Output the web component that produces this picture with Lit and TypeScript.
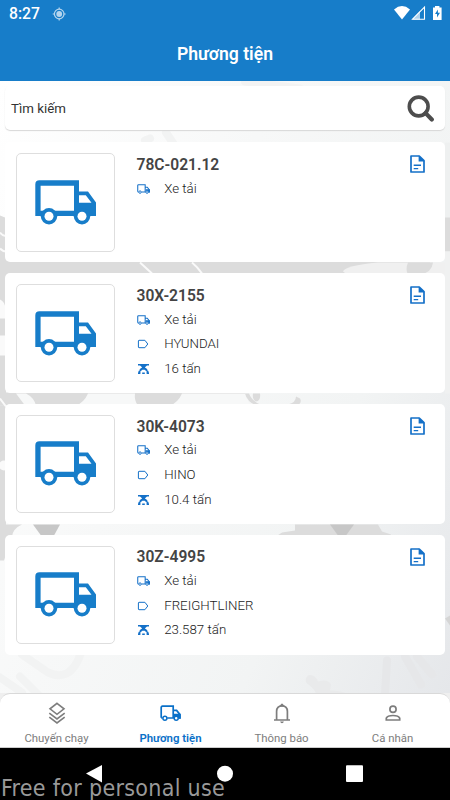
import { LitElement, html, svg, css, nothing } from "lit";
import { customElement, property } from "lit/decorators.js";

interface Vehicle {
  plate: string;
  kind: string;
  brand?: string;
  load?: string;
}

const vehicles: Vehicle[] = [
  { plate: "78C-021.12", kind: "Xe tải" },
  { plate: "30X-2155", kind: "Xe tải", brand: "HYUNDAI", load: "16 tấn" },
  { plate: "30K-4073", kind: "Xe tải", brand: "HINO", load: "10.4 tấn" },
  { plate: "30Z-4995", kind: "Xe tải", brand: "FREIGHTLINER", load: "23.587 tấn" },
];

const smallTruck = svg`
  <path d="M1.2 12.6V2.2Q1.2 1 2.4 1H13.2V12.8H7.2M1.2 12.8H2.6M13.2 5.2H16.6L20 9.4V12.8H18.4" fill="none" stroke="currentColor" stroke-width="1.7"/>
  <path d="M14 8.6H20.6V13.6H18.6A2.6 2.6 0 0 0 14 12Z" fill="currentColor"/>
  <circle cx="4.9" cy="13" r="2" fill="#fff" stroke="currentColor" stroke-width="1.5"/>
  <circle cx="16.2" cy="13" r="2" fill="#fff" stroke="currentColor" stroke-width="1.5"/>`;

@customElement("vehicle-card")
export class VehicleCard extends LitElement {
  @property({ attribute: false }) vehicle!: Vehicle;

  static styles = css`
    :host {
      display: flex;
      box-sizing: border-box;
      height: 120px;
      padding: 11px 19.5px 0 11px;
      background: #fff;
      border-radius: 5px;
    }
    .thumb {
      display: flex;
      align-items: center;
      justify-content: center;
      box-sizing: border-box;
      width: 98.5px;
      height: 98.5px;
      border: 1px solid #dedede;
      border-radius: 5px;
      color: #177dc9;
    }
    .truck { display: block; }
    .info { flex: 1; margin-left: 22px; }
    .plate {
      height: 22.6px;
      padding-top: 0.8px;
      line-height: 23px;
      font-size: 15.6px;
      font-weight: 600;
      color: #444;
    }
    .row { display: flex; align-items: center; height: 24.6px; }
    .icon { width: 27.7px; color: #1470c8; display: flex; align-items: center; }
    .text { font-size: 13.3px; font-weight: 300; color: #1c1c1c; line-height: 24px; white-space: nowrap; }
    .doc { width: 17px; height: 20px; margin-top: 1px; color: #1470c8; }
  `;

  render() {
    const v = this.vehicle;
    return html`
      <div class="thumb">
        <svg class="truck" width="61" height="45" viewBox="0 0 61 45">
          <path fill="currentColor" fill-rule="evenodd" d="M4.5 .3H44V11.5H53L61 22.5V36H.3V4.5Q.3 .3 4.5 .3ZM5.6 5.7V30.7H39V5.7ZM44 15.3V22.7H56.5L50.8 15.3Z"/>
          <circle cx="14" cy="36.2" r="8.2" fill="currentColor"/><circle cx="14" cy="36.2" r="4.5" fill="#fff"/>
          <circle cx="47" cy="36.2" r="8.2" fill="currentColor"/><circle cx="47" cy="36.2" r="4.5" fill="#fff"/>
        </svg>
      </div>
      <div class="info">
        <div class="plate">${v.plate}</div>
        <div class="row">
          <span class="icon"><svg width="13" height="10" viewBox="0 0 21 16">${smallTruck}</svg></span>
          <span class="text">${v.kind}</span>
        </div>
        ${v.brand
          ? html`<div class="row">
              <span class="icon"><svg width="13" height="10" viewBox="0 0 13 10"><path d="M2 1.3H7.9L10.8 5 7.9 8.7H2Q1.4 8.7 1.4 8V2Q1.4 1.3 2 1.3Z" fill="none" stroke="currentColor" stroke-width="1" stroke-linejoin="round"/></svg></span>
              <span class="text">${v.brand}</span>
            </div>`
          : nothing}
        ${v.load
          ? html`<div class="row">
              <span class="icon"><svg width="13" height="12" viewBox="0 0 13 12"><path d="M1 1H12V2.5H10L8 4.2V5H5V4.2L3 2.5H1Z" fill="currentColor"/><path d="M4.6 4.8H8.4Q9.9 5.6 10.8 7.2L9.4 8.2 7.6 6.8H5.4L3.6 8.2 2.2 7.2Q3.1 5.6 4.6 4.8ZM2 7.6L3.6 8.6 3.4 9.7V11H1V10.2Q1.2 8.8 2 7.6ZM11 7.6L9.4 8.6 9.6 9.7V11H12V10.2Q11.8 8.8 11 7.6ZM5.2 9.4H7.8V11H5.2Z" fill="currentColor"/></svg></span>
              <span class="text">${v.load}</span>
            </div>`
          : nothing}
      </div>
      <svg class="doc" viewBox="0 0 17 20">
        <path d="M2 2H10.3L15 6.7V18H2Z" fill="none" stroke="currentColor" stroke-width="1.7" stroke-linejoin="round"/>
        <path d="M9.6 1.6V7.4H15.4Z" fill="currentColor"/>
        <path d="M4.7 11.2H12M4.7 14.6H9.2" stroke="currentColor" stroke-width="1.4"/>
      </svg>
    `;
  }
}

@customElement("app-root")
export class AppRoot extends LitElement {
  static styles = css`
    :host {
      display: flex;
      flex-direction: column;
      position: relative;
      width: 450px;
      height: 800px;
      overflow: hidden;
      font-family: Roboto, "Noto Sans", sans-serif;
      background: #efefef;
    }
    .header { height: 80.5px; background: #177dc9; color: #fff; }
    .status { display: flex; align-items: center; height: 28px; padding: 0 8px 0 9px; }
    .time { font-size: 15.7px; font-weight: 500; width: 42.5px; line-height: 28px; }
    .signals { display: block; margin-left: auto; margin-top: -2px; }
    .title { text-align: center; font-size: 17.6px; font-weight: 600; line-height: 53px; }
    .content {
      position: relative;
      height: 612.5px;
      background: linear-gradient(112deg, #fff 0%, #f7f8f8 40%, #f2f4f4 70%, #e5e7ea 100%);
    }
    .map { position: absolute; inset: 0; width: 450px; height: 667px; }
    .stack { position: relative; display: flex; flex-direction: column; padding: 5.5px 5px 0; }
    .search {
      display: flex;
      align-items: center;
      height: 44px;
      background: #fff;
      border-radius: 5px;
      box-shadow: 0 1px 1px #d8d8d8;
      padding: 0 10px 0 6px;
      margin-bottom: 12px;
    }
    .hint { flex: 1; font-size: 13.3px; color: #333; }
    .list { display: flex; flex-direction: column; gap: 10.87px; }
    .tabs {
      position: relative;
      display: grid;
      grid-template-columns: 113px 115px 107px 115px;
      box-sizing: border-box;
      height: 55px;
      background: #fff;
      border-top: 1px solid #d9d9d9;
      border-bottom: 1px solid #ccc;
      border-radius: 10px 10px 0 0;
    }
    .tab { display: flex; flex-direction: column; align-items: center; color: #7d7d7d; font-size: 11.4px; }
    .tab svg { height: 24px; margin-top: 7px; }
    .label { line-height: 14px; margin-top: 5.5px; white-space: nowrap; }
    .active { color: #0a70c8; font-weight: 600; }
    .system { position: relative; flex: 1; background: #000; }
    .keys { display: block; }
    .watermark {
      position: absolute;
      left: 1px;
      bottom: -2px;
      font-family: "DejaVu Sans Condensed", "DejaVu Sans", sans-serif;
      font-stretch: condensed;
      font-size: 23px;
      letter-spacing: 0.3px;
      line-height: 27px;
      color: #999;
      white-space: nowrap;
    }
  `;

  private renderMap() {
    return html`<svg class="map" viewBox="0 80.5 450 667">
      <g fill="none" stroke="#f2f3f3" stroke-width="8" stroke-linecap="round">
        <path d="M145 140L150 138M166 132L174 144M0 677L22 692M20 676L40 696M22 654L48 672Q70 682 80 655"/>
        <path d="M387 660L385 694M405 656L421 684M417 656L432 674" stroke="#e6e7e9"/>
        <path d="M245 81L300 88" stroke="#f3f3f3"/>
      </g>
      <path d="M308 675Q314 673 318 681Q328 678 331 684L330 690Q342 690 348 694H316Q315 688 307 683Q304 679 308 675Z" fill="#e9eaeb"/>
      <path d="M0 215L10 219H445V163H450V251H430V275H0Z" fill="#dcdcdc"/>
      <path d="M445 142H450V217H445Z" fill="#eef0f0"/>
      <path d="M0 274H6V405H0Z" fill="#dcdcdc"/>
      <path d="M343 271Q345 265 378 262H450V274H347Z" fill="#f0f0f0"/>
      <path d="M408 262H433Q432 272 420 274H408Q405 269 408 262Z" fill="#dcdcdc"/>
      <path d="M445 251H450V393H445Z" fill="#f0f1f1"/>
      <path d="M0 392H245V405H0Z" fill="#dcdcdc"/>
      <path d="M16 393H26Q34 397 36 405H25ZM88 393H135Q134 400 138 405H76Q84 402 88 393ZM182 393H245Q247 401 252 405H170Q178 402 182 393Z" fill="#f7f8f8"/>
      <path d="M253 393H260Q261 400 256 401Q252 399 253 393ZM288 404Q296 402 296 396L300 398Q302 401 299 404ZM245 393H249Q252 401 262 405H256Q247 401 245 393Z" fill="#dcdcdc"/>
      <path d="M0 405H6V524H22Q13 528 12 536L4 560H0Z" fill="#dcdcdc"/>
      <path d="M0 299Q7 302 6 318H0ZM0 335H6V355H0Z" fill="#fafafa"/>
      <circle cx="4" cy="465" r="5" fill="#fafafa"/>
      <path d="M33 524H60L54 535H41Z" fill="#c7c7c7"/>
      <path d="M295 524H378L382 531 391 534V536H276L282 532 295 530Z" fill="#dcdcdc"/>
      <path d="M330 524H354L346 535H338Z" fill="#c7c7c7"/>
      <path d="M140 262L152 273M192 262Q198 267 202 273M0 232Q3 236 6 235M0 248Q3 251 6 251M0 398L6 406" fill="none" stroke="#fafafa" stroke-width="2"/>
      <path d="M445 618L450 615V625Z" fill="#d5d5d5"/>
    </svg>`;
  }

  render() {
    return html`
      <div class="header">
        <div class="status">
          <span class="time">8:27</span>
          <svg width="15" height="15" viewBox="0 0 15 15" color="#b5d5ee"><circle cx="7.2" cy="7" r="4.8" fill="none" stroke="currentColor" stroke-width="1.2"/><circle cx="7.2" cy="7" r="2.9" fill="currentColor"/><path d="M7.2 .5V2.5M7.2 11.5V13.5M.7 7H2.7M11.7 7H13.7" stroke="currentColor" stroke-width="1.2"/></svg>
          <svg class="signals" width="49" height="16" viewBox="393 5 49 16">
            <path d="M394 9.4Q402 2.6 410 9.4L402 19.5Z" fill="#fff"/>
            <path d="M424.5 7V19.2H412.5Z" fill="none" stroke="#fff" stroke-width="1.1"/><path d="M420 11V19.5H412Z" fill="#fff" opacity=".65"/>
            <path d="M433 7.6H435V6H439.4V7.6H441.6V20H433Z" fill="#fff"/><path d="M437.9 9.5L435 14H437V17.5L440 12.8H437.9Z" fill="#177dc9"/>
          </svg>
        </div>
        <div class="title">Phương tiện</div>
      </div>
      <div class="content">
        ${this.renderMap()}
        <div class="stack">
          <div class="search">
            <span class="hint">Tìm kiếm</span>
            <svg width="28" height="28" viewBox="0 0 28 28"><circle cx="11.7" cy="12.5" r="9.4" fill="none" stroke="#4d4d4d" stroke-width="3.6"/><path d="M18.6 19.1L24.8 25.5" stroke="#4d4d4d" stroke-width="4.2" stroke-linecap="round"/></svg>
          </div>
          <div class="list">${vehicles.map((v) => html`<vehicle-card .vehicle=${v}></vehicle-card>`)}</div>
        </div>
      </div>
      <div class="tabs">
        <div class="tab">
          <svg width="18" height="24" viewBox="0 0 18 24" fill="none" stroke="currentColor" stroke-width="1.6"><path d="M9 2.3L16 7.8 9 13.3 2 7.8ZM1.3 12.2L9 18 16.7 12.2M1.3 16.2L9 22 16.7 16.2"/></svg>
          <span class="label">Chuyến chạy</span>
        </div>
        <div class="tab active">
          <svg width="21" height="24" viewBox="0 -4.2 21 24">${smallTruck}</svg>
          <span class="label">Phương tiện</span>
        </div>
        <div class="tab">
          <svg width="18" height="24" viewBox="0 0 18 24"><path d="M3.6 19V10.5Q3.6 4.8 9 4.8T14.4 10.5V19M1 19H17" fill="none" stroke="currentColor" stroke-width="1.7"/><path d="M6 5.4L8 3.2Q9 2 10 3.2L12 5.4ZM7.1 20.6H10.9Q10.4 22.3 9 22.3T7.1 20.6Z" fill="currentColor"/></svg>
          <span class="label">Thông báo</span>
        </div>
        <div class="tab">
          <svg width="16" height="24" viewBox="0 0 16 24" fill="none" stroke="currentColor" stroke-width="1.7"><circle cx="8" cy="8.2" r="3.1"/><path d="M1.3 19V17.2Q2.5 14.5 8 14.5T14.7 17.2V19Z"/></svg>
          <span class="label">Cá nhân</span>
        </div>
      </div>
      <div class="system">
        <svg class="keys" width="450" height="52" viewBox="0 748 450 52" fill="#fff"><path d="M86 773.5L102 765V782.5Z"/><circle cx="225" cy="773.7" r="8"/><rect x="346" y="765.3" width="17" height="16.7" rx="1"/></svg>
        <div class="watermark">Free for personal use</div>
      </div>
    `;
  }
}
